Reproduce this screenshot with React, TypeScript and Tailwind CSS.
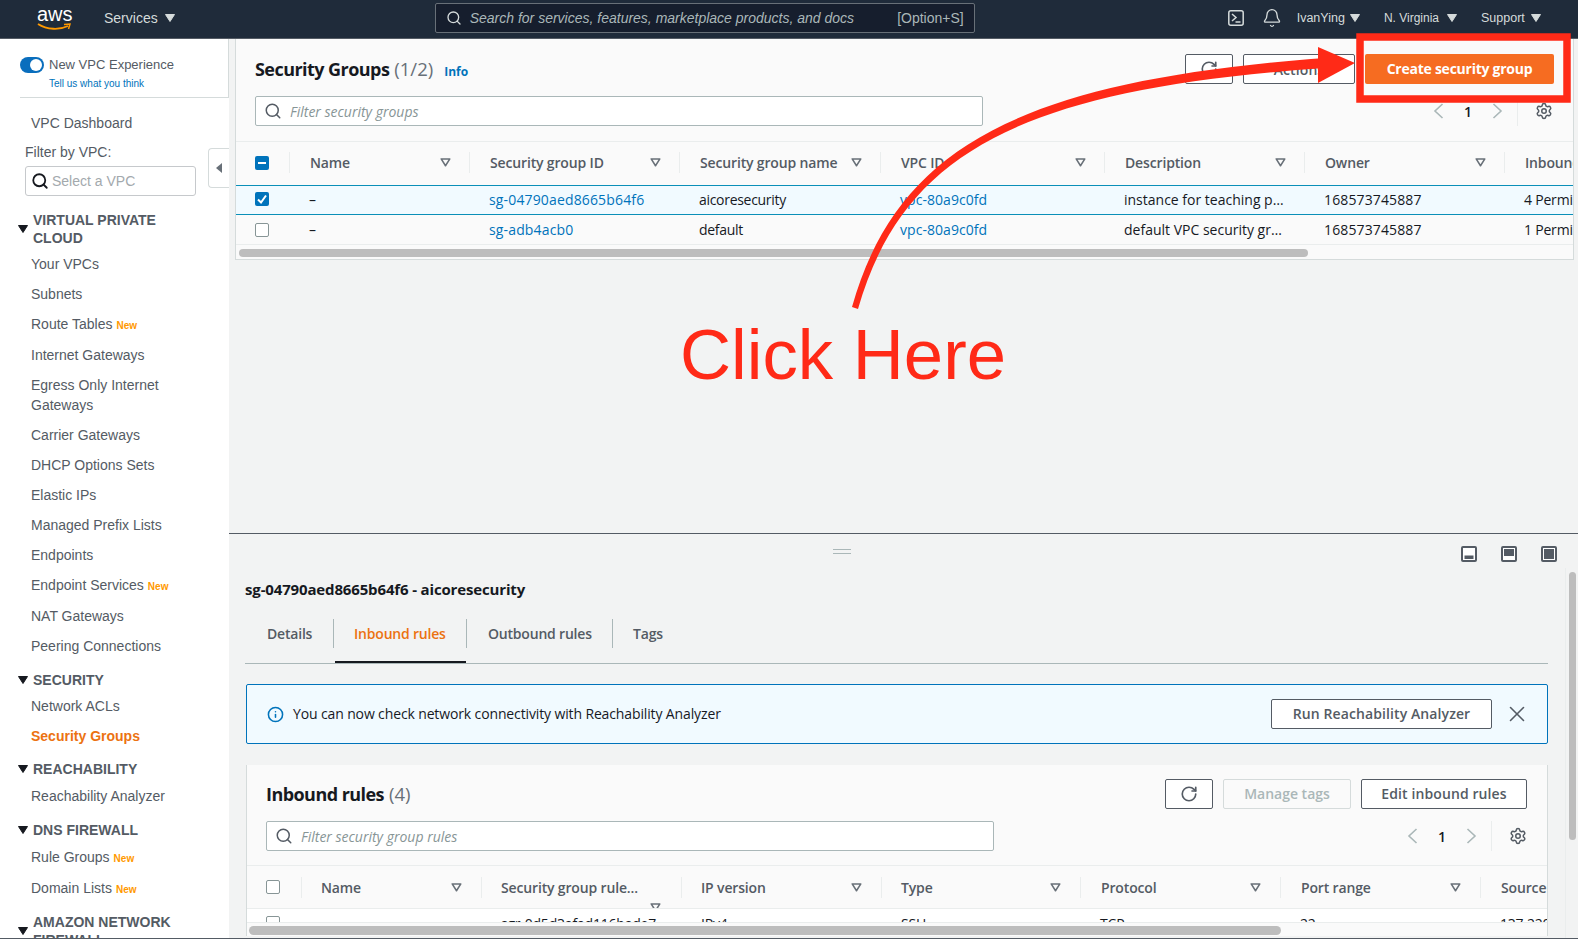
import { Bell, Info, RotateCw, Search, Settings, X } from "lucide-react"

const helv = "font-['Liberation_Sans',Arial,sans-serif]"

function Caret({ className = "" }: { className?: string }) {
  return (
    <svg viewBox="0 0 10 8" className={"w-[10px] h-[8px] " + className}>
      <path d="M0.5 0.5 L9.5 0.5 L5 7.5 Z" fill="currentColor" stroke="currentColor" strokeLinejoin="round" />
    </svg>
  )
}

function SortIcon({ className = "" }: { className?: string }) {
  return (
    <svg viewBox="0 0 12 10" className={"w-[11px] h-[9px] text-[#687078] " + className}>
      <path d="M1.2 1 L10.8 1 L6 8.6 Z" fill="none" stroke="currentColor" strokeWidth="1.7" strokeLinejoin="round" />
    </svg>
  )
}

function Checkbox({ state }: { state: "on" | "off" | "some" }) {
  if (state === "off") {
    return <div className="w-[14px] h-[14px] rounded-[2px] border border-[#879596] bg-white" />
  }
  return (
    <div className="w-[14px] h-[14px] rounded-[2px] bg-[#0073bb] flex items-center justify-center">
      {state === "on" ? (
        <svg viewBox="0 0 14 14" className="w-[14px] h-[14px]">
          <path d="M3 7.5 L6 10.5 L11 3.5" fill="none" stroke="white" strokeWidth="2" />
        </svg>
      ) : (
        <div className="w-[8px] h-[2px] bg-white" />
      )}
    </div>
  )
}

function Th({ label, width, noSort, pad = "pl-[20px] pr-[18px]" }: { label: string; width: string; noSort?: boolean; pad?: string }) {
  return (
    <div className={"shrink-0 flex items-center justify-between h-[21px] border-l border-[#eaeded] " + width + " " + pad}>
      <span className="text-[14px] font-semibold text-[#545b64] tracking-[-0.15px] whitespace-nowrap">{label}</span>
      {!noSort && <SortIcon />}
    </div>
  )
}

function Td({ text, width, color = "text-[#16191f]", spacing = "tracking-[-0.2px]" }: { text: string; width: string; color?: string; spacing?: string }) {
  return (
    <div className={"shrink-0 pl-[20px] pr-[18px] text-[14px] whitespace-nowrap " + width + " " + color + " " + spacing}>
      {text}
    </div>
  )
}

function OutlineBtn({ children, className = "" }: { children: React.ReactNode; className?: string }) {
  return (
    <div className={"h-[30px] pb-[2px] flex items-center justify-center rounded-[2px] border border-[#545b64] bg-white text-[14px] font-semibold text-[#545b64] tracking-[0.1px] " + className}>
      {children}
    </div>
  )
}

function FilterInput({ placeholder }: { placeholder: string }) {
  return (
    <div className="w-[728px] h-[30px] bg-white border border-[#aab7b8] rounded-[2px] flex items-center pl-[8px] gap-[8px]">
      <Search size={18} strokeWidth={2} className="text-[#545b64]" />
      <span className="text-[14px] italic text-[#879596]">{placeholder}</span>
    </div>
  )
}

function Pager({ className = "" }: { className?: string }) {
  return (
    <div className={"flex items-center h-[30px] text-[#aab7b8] " + className}>
      <svg viewBox="0 0 11 16" className="w-[11px] h-[16px]">
        <path d="M9.5 1 L2 8 L9.5 15" fill="none" stroke="currentColor" strokeWidth="1.6" />
      </svg>
      <span className="w-[48px] text-center text-[14px] font-semibold text-[#16191f]">1</span>
      <svg viewBox="0 0 11 16" className="w-[11px] h-[16px]">
        <path d="M1.5 1 L9 8 L1.5 15" fill="none" stroke="currentColor" strokeWidth="1.6" />
      </svg>
      <div className="w-px h-[30px] bg-[#eaeded] ml-[14px] mr-[17px]" />
      <Settings size={18} strokeWidth={2} className="text-[#545b64]" />
    </div>
  )
}

function PanelIcon({ fill }: { fill: "low" | "top" | "full" }) {
  return (
    <svg viewBox="0 0 16 16" className="w-[16px] h-[16px]">
      <rect x="1" y="1" width="14" height="14" rx="1" fill="#fff" stroke="#545b64" strokeWidth="2" />
      {fill === "low" && <rect x="3.5" y="9.5" width="9" height="3.5" fill="#545b64" />}
      {fill === "top" && <rect x="3" y="3" width="10" height="7" fill="#545b64" />}
      {fill === "full" && <rect x="3" y="3" width="10" height="10" fill="#545b64" />}
    </svg>
  )
}

function NavItem({ label, isNew, active }: { label: string; isNew?: boolean; active?: boolean }) {
  return (
    <div className={"pl-[31px] pr-[40px] pt-[5px] text-[14px] leading-[20px] " + (isNew ? "pb-[6px] " : "pb-[5px] ") + (active ? "font-bold text-[#ec7211]" : "text-[#545b64]")}>
      {label}
      {isNew && <span className="ml-[4px] text-[10px] leading-none font-bold text-[#ff9900]">New</span>}
    </div>
  )
}

function NavHead({ label, className = "" }: { label: string; className?: string }) {
  return (
    <div className={"relative pl-[33px] pr-[50px] text-[14px] leading-[18px] font-bold text-[#545b64] " + className}>
      <Caret className="absolute left-[18px] top-1/2 -translate-y-1/2 text-[#16191f]" />
      {label}
    </div>
  )
}

function Sidebar() {
  return (
    <aside className={"w-[229px] shrink-0 bg-white overflow-hidden " + helv}>
      <div className="ml-[20px] border-b border-r border-[#d5dbdb] h-[59px] pt-[17px] mb-[10px]">
        <div className="flex items-center gap-[5px]">
          <div className="w-[24px] h-[16px] rounded-full bg-[#0a6ebd] flex items-center justify-end pr-[2px]">
            <div className="w-[12px] h-[12px] rounded-full bg-white" />
          </div>
          <span className="text-[13px] leading-[18px] text-[#545b64]">New VPC Experience</span>
        </div>
        <div className="ml-[29px] text-[10px] leading-[14px] mt-[3px] text-[#0073bb]">Tell us what you think</div>
      </div>
      <NavItem label="VPC Dashboard" />
      <div className="ml-[25px] mt-[4px] text-[14px] leading-[20px] text-[#545b64]">Filter by VPC:</div>
      <div className="ml-[25px] mt-[4px] w-[171px] h-[30px] border border-[#c6c9cc] rounded-[3px] flex items-center pl-[5px] gap-[3px]">
        <Search size={18} strokeWidth={2.4} className="text-[#16191f]" />
        <span className="text-[14px] text-[#a3a9ad]">Select a VPC</span>
      </div>
      <NavHead label="VIRTUAL PRIVATE CLOUD" className="mt-[15px] mb-[2px]" />
      <NavItem label="Your VPCs" />
      <NavItem label="Subnets" />
      <NavItem label="Route Tables" isNew />
      <NavItem label="Internet Gateways" />
      <NavItem label="Egress Only Internet Gateways" />
      <NavItem label="Carrier Gateways" />
      <NavItem label="DHCP Options Sets" />
      <NavItem label="Elastic IPs" />
      <NavItem label="Managed Prefix Lists" />
      <NavItem label="Endpoints" />
      <NavItem label="Endpoint Services" isNew />
      <NavItem label="NAT Gateways" />
      <NavItem label="Peering Connections" />
      <NavHead label="SECURITY" className="mt-[10px] mb-[2px]" />
      <NavItem label="Network ACLs" />
      <NavItem label="Security Groups" active />
      <NavHead label="REACHABILITY" className="mt-[9px] mb-[3px]" />
      <NavItem label="Reachability Analyzer" />
      <NavHead label="DNS FIREWALL" className="mt-[10px] mb-[3px]" />
      <NavItem label="Rule Groups" isNew />
      <NavItem label="Domain Lists" isNew />
      <NavHead label="AMAZON NETWORK FIREWALL" className="mt-[9px]" />
    </aside>
  )
}

function TopBar() {
  return (
    <header className={"h-[39px] shrink-0 bg-[#1f2b3a] border-b border-[#545b64] pb-[2px] flex items-center text-[#d5dbdb] " + helv}>
      <div className="relative w-[34px] h-[28px] ml-[37px]">
        <span className="absolute left-0 -top-[2px] w-[34px] text-center text-[20px] leading-[24px] text-white">aws</span>
        <svg viewBox="0 0 34 8" className="absolute left-0 top-[19px] w-[34px] h-[8px]">
          <path d="M1 1 C10 7 23 7 31 3" fill="none" stroke="#ff9900" strokeWidth="1.8" />
          <path d="M27 1.5 L33 1 L31.5 6" fill="none" stroke="#ff9900" strokeWidth="1.5" />
        </svg>
      </div>
      <span className="ml-[33px] text-[14px]">Services</span>
      <Caret className="ml-[7px]" />
      <div className="ml-[260px] w-[540px] h-[30px] rounded-[2px] bg-[#161e2d] border border-[#687078] flex items-center pl-[10px] pr-[10px]">
        <Search size={16} strokeWidth={2} className="text-[#d5dbdb]" />
        <span className="ml-[8px] text-[14px] italic text-[#aab7b8]">Search for services, features, marketplace products, and docs</span>
        <span className="ml-auto text-[14px] text-[#aab7b8]">[Option+S]</span>
      </div>
      <svg viewBox="0 0 16 16" className="ml-[253px] w-[16px] h-[16px]">
        <rect x="0.8" y="0.8" width="14.4" height="14.4" rx="2" fill="none" stroke="#d5dbdb" strokeWidth="1.5" />
        <path d="M4 4 L8 7.5 L4 11 M7.5 12 L12.5 12" fill="none" stroke="#d5dbdb" strokeWidth="1.5" />
      </svg>
      <Bell size={20} strokeWidth={1.6} className="ml-[18px]" />
      <span className="ml-[15px] text-[12.5px]">IvanYing</span>
      <Caret className="ml-[5px]" />
      <span className="ml-[24px] text-[12px]">N. Virginia</span>
      <Caret className="ml-[8px]" />
      <span className="ml-[24px] text-[12.5px]">Support</span>
      <Caret className="ml-[6px]" />
    </header>
  )
}

const linkBlue = "text-[#0073bb]"

function GroupsTable() {
  const rows = [
    { id: "sg-04790aed8665b64f6", name: "aicoresecurity", desc: "instance for teaching p…", perm: "4 Permissions", selected: true },
    { id: "sg-adb4acb0", name: "default", desc: "default VPC security gr…", perm: "1 Permission", selected: false },
  ]
  return (
    <div className="overflow-hidden">
      <div className="h-[44px] pb-[2px] flex items-center border-t border-[#eaeded]">
        <div className="w-[53px] shrink-0 pl-[19px]">
          <Checkbox state="some" />
        </div>
        <Th label="Name" width="w-[180px]" />
        <Th label="Security group ID" width="w-[210px]" />
        <Th label="Security group name" width="w-[201px]" />
        <Th label="VPC ID" width="w-[224px]" />
        <Th label="Description" width="w-[200px]" />
        <Th label="Owner" width="w-[200px]" />
        <Th label="Inbound rules count" width="w-[200px]" noSort />
      </div>
      {rows.map((r) => (
        <div
          key={r.id}
          className={"h-[30px] flex items-center " + (r.selected ? "pb-[2px] bg-[#f1faff] border-y border-[#0a8fb8]" : "border-b border-[#eaeded]")}
        >
          <div className="w-[53px] shrink-0 pl-[19px]">
            <Checkbox state={r.selected ? "on" : "off"} />
          </div>
          <Td text="–" width="w-[180px]" />
          <Td text={r.id} width="w-[210px]" color={linkBlue} spacing="tracking-[0.15px]" />
          <Td text={r.name} width="w-[201px]" spacing="tracking-[-0.3px]" />
          <Td text="vpc-80a9c0fd" width="w-[224px]" color={linkBlue} spacing="tracking-[0.05px]" />
          <Td text={r.desc} width="w-[200px]" spacing="tracking-[0px]" />
          <Td text="168573745887" width="w-[200px]" spacing="tracking-[0.13px]" />
          <Td text={r.perm} width="w-[200px]" />
        </div>
      ))}
      <div className="h-[14px] pt-[4px] pl-[3px]">
        <div className="w-[1069px] h-[8px] rounded-full bg-[#bdbdbd]" />
      </div>
    </div>
  )
}

function RulesTable() {
  return (
    <div className="relative overflow-hidden">
      <div className="h-[43px] flex items-center border-t border-[#eaeded]">
        <div className="w-[54px] shrink-0 pl-[19px]">
          <Checkbox state="off" />
        </div>
        <Th label="Name" width="w-[180px]" pad="pl-[19px] pr-[19px]" />
        <Th label="Security group rule..." width="w-[200px]" noSort pad="pl-[19px] pr-[19px]" />
        <Th label="IP version" width="w-[200px]" pad="pl-[19px] pr-[19px]" />
        <Th label="Type" width="w-[199px]" pad="pl-[19px] pr-[19px]" />
        <Th label="Protocol" width="w-[200px]" pad="pl-[20px] pr-[19px]" />
        <Th label="Port range" width="w-[200px]" pad="pl-[20px] pr-[19px]" />
        <Th label="Source" width="w-[200px]" noSort pad="pl-[20px] pr-[19px]" />
      </div>
      <SortIcon className="absolute left-[403px] top-[38px]" />
      <div className="relative h-[14px] bg-white border-t border-[#eaeded] overflow-hidden flex items-start pt-[4px]">
        <div className="w-[54px] shrink-0 pl-[19px] mt-[3px]">
          <Checkbox state="off" />
        </div>
        <Td text="–" width="w-[180px]" />
        <Td text="sgr-0d5d3afad116bade7" width="w-[200px]" />
        <Td text="IPv4" width="w-[200px]" />
        <Td text="SSH" width="w-[199px]" />
        <Td text="TCP" width="w-[200px]" />
        <Td text="22" width="w-[200px]" />
        <Td text="137.220.0.0/16" width="w-[200px]" />
      </div>
      <div className="h-[14px] pt-[3px] pl-[2px] border-t border-[#eaeded]">
        <div className="w-[1032px] h-[9px] rounded-full bg-[#bdbdbd]" />
      </div>
    </div>
  )
}

function Annotation() {
  return (
    <>
      <svg className="absolute inset-0 w-[1578px] h-[939px] pointer-events-none" viewBox="0 0 1578 939">
        <path d="M852 307 C 897 148, 1018 81, 1325 58 L1325 68 C 1022 89, 903 152, 858 309 Z" fill="#ff2a17" />
        <path d="M1318 47 L1355 63 L1318 83 Z" fill="#ff2a17" />
        <rect x="1360" y="37" width="207" height="62" fill="none" stroke="#ff2a17" strokeWidth="7.5" />
      </svg>
      <span className={"absolute left-[680px] top-[314px] text-[70.7px] leading-[82px] text-[#ff2a17] whitespace-nowrap " + helv}>
        Click Here
      </span>
    </>
  )
}

export default function App() {
  return (
    <div className="relative w-[1578px] h-[939px] overflow-hidden flex flex-col bg-[#f2f3f3] font-['Open_Sans',sans-serif]">
      <TopBar />
      <div className="flex-1 min-h-0 flex border-b border-[#545b64]">
        <Sidebar />
        <main className="flex-1 min-w-0 flex flex-col">
          <section className="relative h-[494px] shrink-0 pl-[6px] pr-[4px]">
            <div className="absolute -left-[21px] top-[109px] w-[21px] h-[40px] bg-white border border-r-0 border-[#d5dbdb] rounded-l-[4px] flex items-center pl-[7px]">
              <div className="w-0 h-0 border-y-[5px] border-y-transparent border-r-[6px] border-r-[#687078]" />
            </div>
            <div className="bg-[#fafafa] border-l border-b border-r border-[#d5dbdb]">
              <div className="h-[102px] pl-[19px] pr-[19px] pt-[15px] flex justify-between">
                <div>
                  <div className="h-[30px] flex items-center">
                    <span className="text-[18px] font-bold text-[#16191f] tracking-[-0.55px]">Security Groups</span>
                    <span className="ml-[5px] text-[18.5px] text-[#687078]">(1/2)</span>
                    <span className="ml-[11px] mt-[5px] text-[12px] font-bold text-[#0073bb]">Info</span>
                  </div>
                  <div className="mt-[12px]">
                    <FilterInput placeholder="Filter security groups" />
                  </div>
                </div>
                <div className="flex flex-col items-end">
                  <div className="flex gap-[10px]">
                    <OutlineBtn className="w-[48px]">
                      <RotateCw size={18} strokeWidth={2.2} className="mt-[2px]" />
                    </OutlineBtn>
                    <OutlineBtn className="w-[112px]">
                      <span className="mt-[3px]">Actions</span>
                    </OutlineBtn>
                    <div className="w-[189px] h-[30px] pb-[2px] rounded-[2px] bg-[#f66c21] flex items-center justify-center text-[14px] font-bold text-white tracking-[-0.25px]">
                      Create security group
                    </div>
                  </div>
                  <div className="mt-[12px]">
                    <Pager className="mr-[1px]" />
                  </div>
                </div>
              </div>
              <GroupsTable />
            </div>
          </section>
          <section className="flex-1 min-h-0 border-t border-[#545b64] flex flex-col overflow-hidden">
            <div className="h-[34px] shrink-0 relative pt-[6px] flex items-center justify-end gap-[24px] pr-[21px]">
              <div className="absolute left-[604px] top-[15px] w-[18px] h-[5px] border-y border-[#aab7b8]" />
              <PanelIcon fill="low" />
              <PanelIcon fill="top" />
              <PanelIcon fill="full" />
            </div>
            <div className="flex-1 min-h-0 flex">
              <div className="flex-1 min-w-0 pl-[16px] pr-[17px]">
                <div className="mt-[11px] text-[15px] leading-[20px] font-bold text-[#16191f] tracking-[-0.15px]">
                  sg-04790aed8665b64f6 - aicoresecurity
                </div>
                <div className="mt-[20px] h-[45px] flex items-start border-b border-[#aab7b8] relative text-[14px] font-semibold text-[#545b64] tracking-[-0.2px]">
                  <div className="h-[29px] flex items-center w-[88px] pl-[22px]">Details</div>
                  <div className="relative h-[29px] flex items-center w-[133px] pl-[20px] border-l border-[#aab7b8] text-[#ec7211]">
                    Inbound rules
                    <div className="absolute left-[1px] right-0 top-[42px] h-[2px] bg-[#16191f]" />
                  </div>
                  <div className="h-[29px] flex items-center w-[146px] pl-[21px] border-l border-[#aab7b8]">Outbound rules</div>
                  <div className="h-[29px] flex items-center pl-[20px] border-l border-[#aab7b8]">Tags</div>
                </div>
                <div className="mt-[20px] ml-[1px] h-[60px] bg-[#f1faff] border border-[#0073bb] rounded-[2px] flex items-center pl-[20px] pr-[17px]">
                  <Info size={17} strokeWidth={2.2} className="text-[#0073bb]" />
                  <span className="ml-[9px] mb-[2px] text-[14px] text-[#16191f] tracking-[-0.13px]">
                    You can now check network connectivity with Reachability Analyzer
                  </span>
                  <OutlineBtn className="ml-auto w-[221px]">Run Reachability Analyzer</OutlineBtn>
                  <X size={26} strokeWidth={1.5} className="ml-[12px] text-[#545b64]" />
                </div>
                <div className="mt-[21px] ml-[1px] bg-[#fafafa] border-l border-r border-[#d5dbdb]">
                  <div className="h-[100px] pl-[19px] pr-[20px] pt-[14px] flex justify-between">
                    <div>
                      <div className="h-[30px] flex items-center">
                        <span className="text-[18px] font-bold text-[#16191f] tracking-[-0.55px]">Inbound rules</span>
                        <span className="ml-[5px] text-[18.5px] text-[#687078]">(4)</span>
                      </div>
                      <div className="mt-[12px]">
                        <FilterInput placeholder="Filter security group rules" />
                      </div>
                    </div>
                    <div className="flex flex-col items-end">
                      <div className="flex gap-[10px]">
                        <OutlineBtn className="w-[48px]">
                          <RotateCw size={18} strokeWidth={2.2} className="mt-[2px]" />
                        </OutlineBtn>
                        <div className="w-[128px] h-[30px] pb-[2px] flex items-center justify-center rounded-[2px] border border-[#d5dbdb] bg-[#fafafa] text-[14px] font-semibold text-[#aab7b8]">
                          Manage tags
                        </div>
                        <OutlineBtn className="w-[166px]">Edit inbound rules</OutlineBtn>
                      </div>
                      <div className="mt-[12px]">
                        <Pager />
                      </div>
                    </div>
                  </div>
                  <RulesTable />
                </div>
              </div>
              <div className="w-[13px] shrink-0 border-l border-[#eaeded] pl-[3px] pt-[4px]">
                <div className="w-[7px] h-[268px] rounded-full bg-[#bdbdbd]" />
              </div>
            </div>
          </section>
        </main>
      </div>
      <Annotation />
    </div>
  )
}
